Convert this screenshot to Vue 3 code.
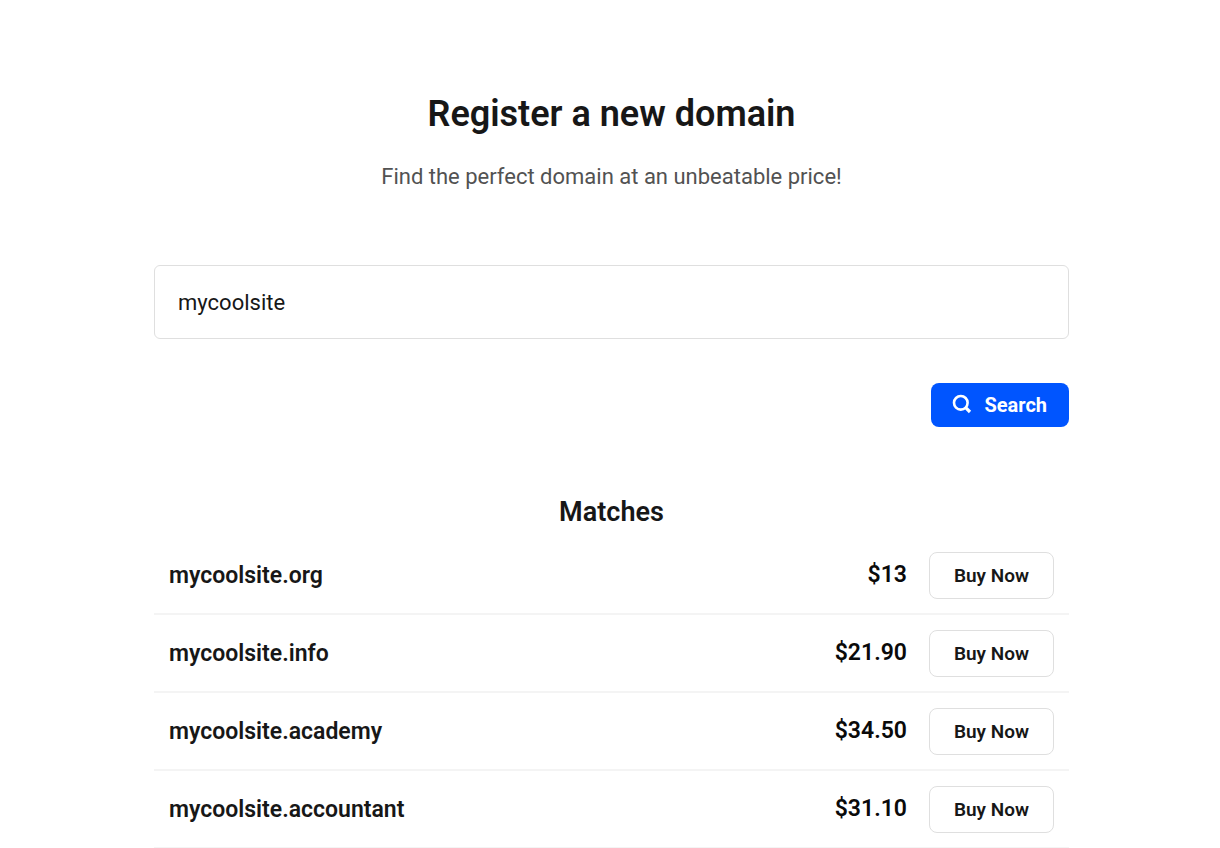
<script setup>
import { ref } from 'vue'

const query = ref('mycoolsite')
const matches = [
  { name: 'mycoolsite.org', price: '$13' },
  { name: 'mycoolsite.info', price: '$21.90' },
  { name: 'mycoolsite.academy', price: '$34.50' },
  { name: 'mycoolsite.accountant', price: '$31.10' },
]
</script>

<template>
  <main class="page">
    <header class="intro">
      <h1>Register a new domain</h1>
      <p>Find the perfect domain at an unbeatable price!</p>
    </header>

    <form class="search" @submit.prevent>
      <input v-model="query" class="field" type="text" aria-label="Domain name" />
      <button class="submit" type="submit">
        <svg width="20" height="22" viewBox="0 0 20 22" fill="none" stroke="currentColor" aria-hidden="true">
          <circle cx="8.8" cy="8.8" r="6.8" stroke-width="2.6" />
          <path d="M13.2 13.2 18 18" stroke-width="3.2" />
        </svg>
        <span>Search</span>
      </button>
    </form>

    <section class="results">
      <h2>Matches</h2>
      <ul>
        <li v-for="m in matches" :key="m.name">
          <span class="name">{{ m.name }}</span>
          <span class="price">{{ m.price }}</span>
          <button class="buy" type="button">Buy Now</button>
        </li>
      </ul>
    </section>
  </main>
</template>

<style>
body {
  background: #fff;
}
</style>

<style scoped>
.page {
  padding: 90px 151px 0 154px;
  color: #171717;
  font-family: Roboto, "Liberation Sans", sans-serif;
}
.intro {
  text-align: center;
}
h1 {
  margin: 0;
  font-size: 36px;
  font-weight: 600;
  line-height: 48px;
}
.intro p {
  margin: 23px 0 0;
  color: #525252;
  font-size: 22px;
  line-height: 32px;
}
.search {
  display: flex;
  flex-direction: column;
  margin-top: 72px;
}
.field {
  box-sizing: border-box;
  width: 100%;
  height: 74px;
  padding: 0 23px;
  border: 1px solid #dfdfdf;
  border-radius: 6px;
  background: #fff;
  color: #171717;
  font: 400 22px Roboto, sans-serif;
}
.submit {
  display: flex;
  align-self: flex-end;
  align-items: center;
  gap: 12px;
  height: 44px;
  margin-top: 44px;
  padding: 0 22px 0 21px;
  border: 0;
  border-radius: 8px;
  background: #0055ff;
  color: #fff;
  font: 700 20px Roboto, sans-serif;
}
.results {
  margin-top: 69px;
}
h2 {
  margin: 0;
  font-size: 27px;
  font-weight: 600;
  line-height: 32px;
  text-align: center;
}
ul {
  margin: 9px 0 0;
  padding: 0;
  list-style: none;
}
li {
  display: flex;
  align-items: center;
  box-sizing: border-box;
  height: 78px;
  padding: 1px 15px 0;
  border-bottom: 2px solid #f4f4f4;
}
.name {
  flex: 1;
  font-size: 23px;
  font-weight: 600;
}
.price {
  margin-right: 22px;
  padding-bottom: 2px;
  color: #0a0a0a;
  font-size: 23px;
  font-weight: 600;
}
.buy {
  box-sizing: border-box;
  height: 47px;
  padding: 0 24px;
  border: 1px solid #dfdfdf;
  border-radius: 8px;
  background: #fff;
  color: #171717;
  font: 600 19px Roboto, sans-serif;
}
</style>
